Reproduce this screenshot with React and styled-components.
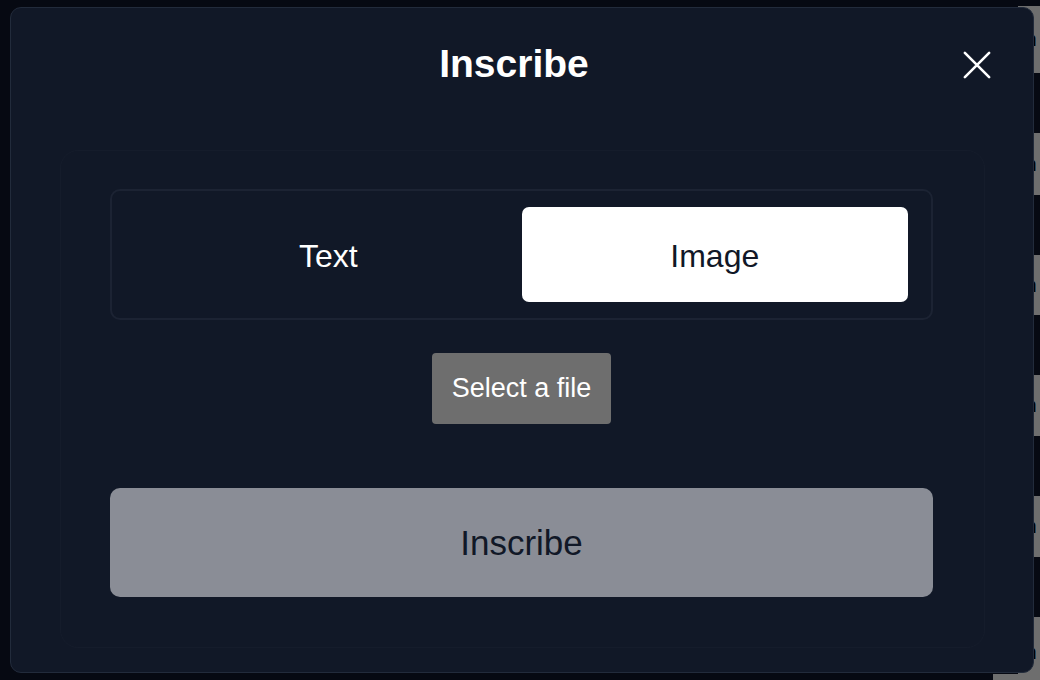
import React, { useState } from "react";
import styled, { createGlobalStyle } from "styled-components";

const Global = createGlobalStyle`
  html, body { margin: 0; padding: 0; }
  body {
    background: #060912;
    font-family: "Liberation Sans", Arial, sans-serif;
    width: 1040px;
    height: 680px;
    overflow: hidden;
  }
  * { box-sizing: border-box; }
`;

const Page = styled.div`
  position: relative;
  width: 1040px;
  height: 680px;
  overflow: hidden;
  background: #060912;
`;

const BackList = styled.div`
  display: flex;
  flex-direction: column;
  align-items: flex-end;
  padding-top: 6px;
  gap: 60px;
`;

const BackItem = styled.div`
  width: 22px;
  height: ${(p) => p.$h || 61}px;
  background: #6e6e6e;
  color: #000;
  font-size: 20px;
  display: flex;
  align-items: center;
  justify-content: flex-start;
  padding-left: 2px;
  overflow: hidden;
  white-space: nowrap;
`;

const BottomStrip = styled.div`
  position: absolute;
  left: 993px;
  right: 0;
  bottom: 0;
  height: 6px;
  background: #6e6e6e;
`;

const Modal = styled.div`
  position: absolute;
  left: 10px;
  top: 7px;
  width: 1024px;
  height: 666px;
  background: #111827;
  border: 1px solid #222b3b;
  border-radius: 11px;
  display: flex;
  flex-direction: column;
  padding: 0 48px 24px 49px;
`;

const Header = styled.div`
  position: relative;
  height: 143px;
  display: flex;
  justify-content: center;
  padding-top: 33px;
  padding-right: 17px;
`;

const Title = styled.h2`
  margin: 0;
  font-size: 39px;
  line-height: 46px;
  font-weight: 700;
  color: #ffffff;
`;

const Close = styled.button`
  position: absolute;
  right: -14px;
  top: 35px;
  width: 44px;
  height: 44px;
  background: none;
  border: none;
  padding: 8px;
  cursor: pointer;
  display: flex;
  align-items: center;
  justify-content: center;
`;

const Card = styled.div`
  flex: 1;
  border: 1px solid #151c2b;
  border-radius: 18px;
  padding: 38px 51px 50px 49px;
  display: flex;
  flex-direction: column;
  align-items: center;
`;

const Tabs = styled.div`
  width: 100%;
  border: 2px solid #1c2333;
  border-radius: 10px;
  padding: 16px 23px;
  display: grid;
  grid-template-columns: 1fr 1fr;
`;

const Tab = styled.button`
  height: 95px;
  border: none;
  border-radius: 7px;
  padding: 4px 0 0;
  background: ${(p) => (p.$active ? "#ffffff" : "transparent")};
  color: ${(p) => (p.$active ? "#111827" : "#ffffff")};
  font-family: "Liberation Sans", Arial, sans-serif;
  font-size: 32px;
  cursor: pointer;
`;

const SelectButton = styled.button`
  margin-top: 33px;
  height: 71px;
  padding: 0 20px;
  border: none;
  border-radius: 4px;
  background: #6e6e6e;
  color: #ffffff;
  font-family: "Liberation Sans", Arial, sans-serif;
  font-size: 27px;
  cursor: pointer;
`;

const Submit = styled.button`
  margin-top: 64px;
  width: 100%;
  height: 109px;
  border: none;
  border-radius: 10px;
  background: #8a8d96;
  color: #111827;
  font-family: "Liberation Sans", Arial, sans-serif;
  font-size: 35px;
  cursor: pointer;
`;

export default function App() {
  const [mode, setMode] = useState("image");
  return (
    <Page>
      <Global />
      <BackList>
        <BackItem $h={67}>In</BackItem>
        <BackItem $h={62}>In</BackItem>
        <BackItem $h={60}>In</BackItem>
        <BackItem $h={61}>In</BackItem>
        <BackItem $h={61}>In</BackItem>
        <BackItem $h={70}>In</BackItem>
      </BackList>
      <BottomStrip />
      <Modal>
        <Header>
          <Title>Inscribe</Title>
          <Close aria-label="Close">
            <svg width="30" height="30" viewBox="0 0 30 30">
              <path
                d="M2 2 L28 28 M28 2 L2 28"
                stroke="#ffffff"
                strokeWidth="2.8"
                strokeLinecap="round"
              />
            </svg>
          </Close>
        </Header>
        <Card>
          <Tabs>
            <Tab $active={mode === "text"} onClick={() => setMode("text")}>
              Text
            </Tab>
            <Tab $active={mode === "image"} onClick={() => setMode("image")}>
              Image
            </Tab>
          </Tabs>
          <SelectButton>Select a file</SelectButton>
          <Submit>Inscribe</Submit>
        </Card>
      </Modal>
    </Page>
  );
}
